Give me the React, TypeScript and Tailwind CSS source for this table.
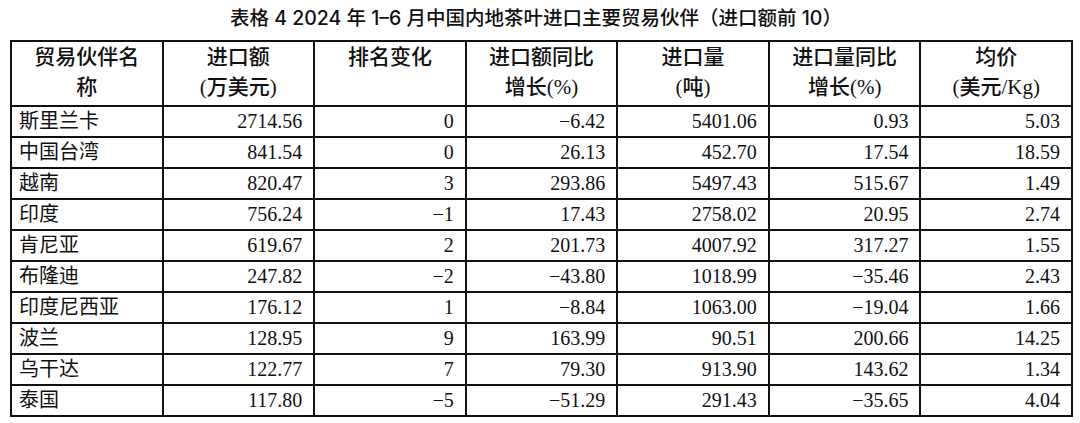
import { Fragment } from "react";

type Row = {
  name: string;
  amount: string;
  rankChange: string;
  amountYoY: string;
  volume: string;
  volumeYoY: string;
  price: string;
};

const rows: Row[] = [
  { name: "斯里兰卡", amount: "2714.56", rankChange: "0", amountYoY: "−6.42", volume: "5401.06", volumeYoY: "0.93", price: "5.03" },
  { name: "中国台湾", amount: "841.54", rankChange: "0", amountYoY: "26.13", volume: "452.70", volumeYoY: "17.54", price: "18.59" },
  { name: "越南", amount: "820.47", rankChange: "3", amountYoY: "293.86", volume: "5497.43", volumeYoY: "515.67", price: "1.49" },
  { name: "印度", amount: "756.24", rankChange: "−1", amountYoY: "17.43", volume: "2758.02", volumeYoY: "20.95", price: "2.74" },
  { name: "肯尼亚", amount: "619.67", rankChange: "2", amountYoY: "201.73", volume: "4007.92", volumeYoY: "317.27", price: "1.55" },
  { name: "布隆迪", amount: "247.82", rankChange: "−2", amountYoY: "−43.80", volume: "1018.99", volumeYoY: "−35.46", price: "2.43" },
  { name: "印度尼西亚", amount: "176.12", rankChange: "1", amountYoY: "−8.84", volume: "1063.00", volumeYoY: "−19.04", price: "1.66" },
  { name: "波兰", amount: "128.95", rankChange: "9", amountYoY: "163.99", volume: "90.51", volumeYoY: "200.66", price: "14.25" },
  { name: "乌干达", amount: "122.77", rankChange: "7", amountYoY: "79.30", volume: "913.90", volumeYoY: "143.62", price: "1.34" },
  { name: "泰国", amount: "117.80", rankChange: "−5", amountYoY: "−51.29", volume: "291.43", volumeYoY: "−35.65", price: "4.04" },
];

const headers: string[][] = [
  ["贸易伙伴名", "称"],
  ["进口额", "(万美元)"],
  ["排名变化"],
  ["进口额同比", "增长(%)"],
  ["进口量", "(吨)"],
  ["进口量同比", "增长(%)"],
  ["均价", "(美元/Kg)"],
];

export default function App() {
  return (
    <div className="w-[1080px] h-[423px] bg-white text-black overflow-hidden">
      {/* Caption */}
      <div className="h-[40px] pt-[4px] pr-[8px] text-center text-[19.5px] leading-[28px] font-medium font-['Inter','Noto_Sans_CJK_SC',sans-serif] text-[#111]">
        表格 4 2024 年 1–6 月中国内地茶叶进口主要贸易伙伴（进口额前 10）
      </div>

      {/* Table */}
      <div className="ml-[10px] w-[1063px] bg-[#111] p-[2px] grid grid-cols-7 gap-[2px] grid-rows-[63px_repeat(10,29px)] font-['Liberation_Serif','Noto_Sans_CJK_SC',serif] text-[#111]">
        {headers.map((lines, i) => (
          <div
            key={i}
            className="bg-white text-center text-[21px] leading-[30px] font-medium"
          >
            {lines.map((l, j) => (
              <div key={j}>{l}</div>
            ))}
          </div>
        ))}

        {rows.map((r) => (
          <Fragment key={r.name}>
            <div className="bg-white pl-[7px] text-[20px] leading-[29px]">
              {r.name}
            </div>
            {[r.amount, r.rankChange, r.amountYoY, r.volume, r.volumeYoY, r.price].map((v, k) => (
              <div
                key={k}
                className="bg-white pr-[11px] text-right text-[20px] leading-[29px]"
              >
                {v}
              </div>
            ))}
          </Fragment>
        ))}
      </div>
    </div>
  );
}
